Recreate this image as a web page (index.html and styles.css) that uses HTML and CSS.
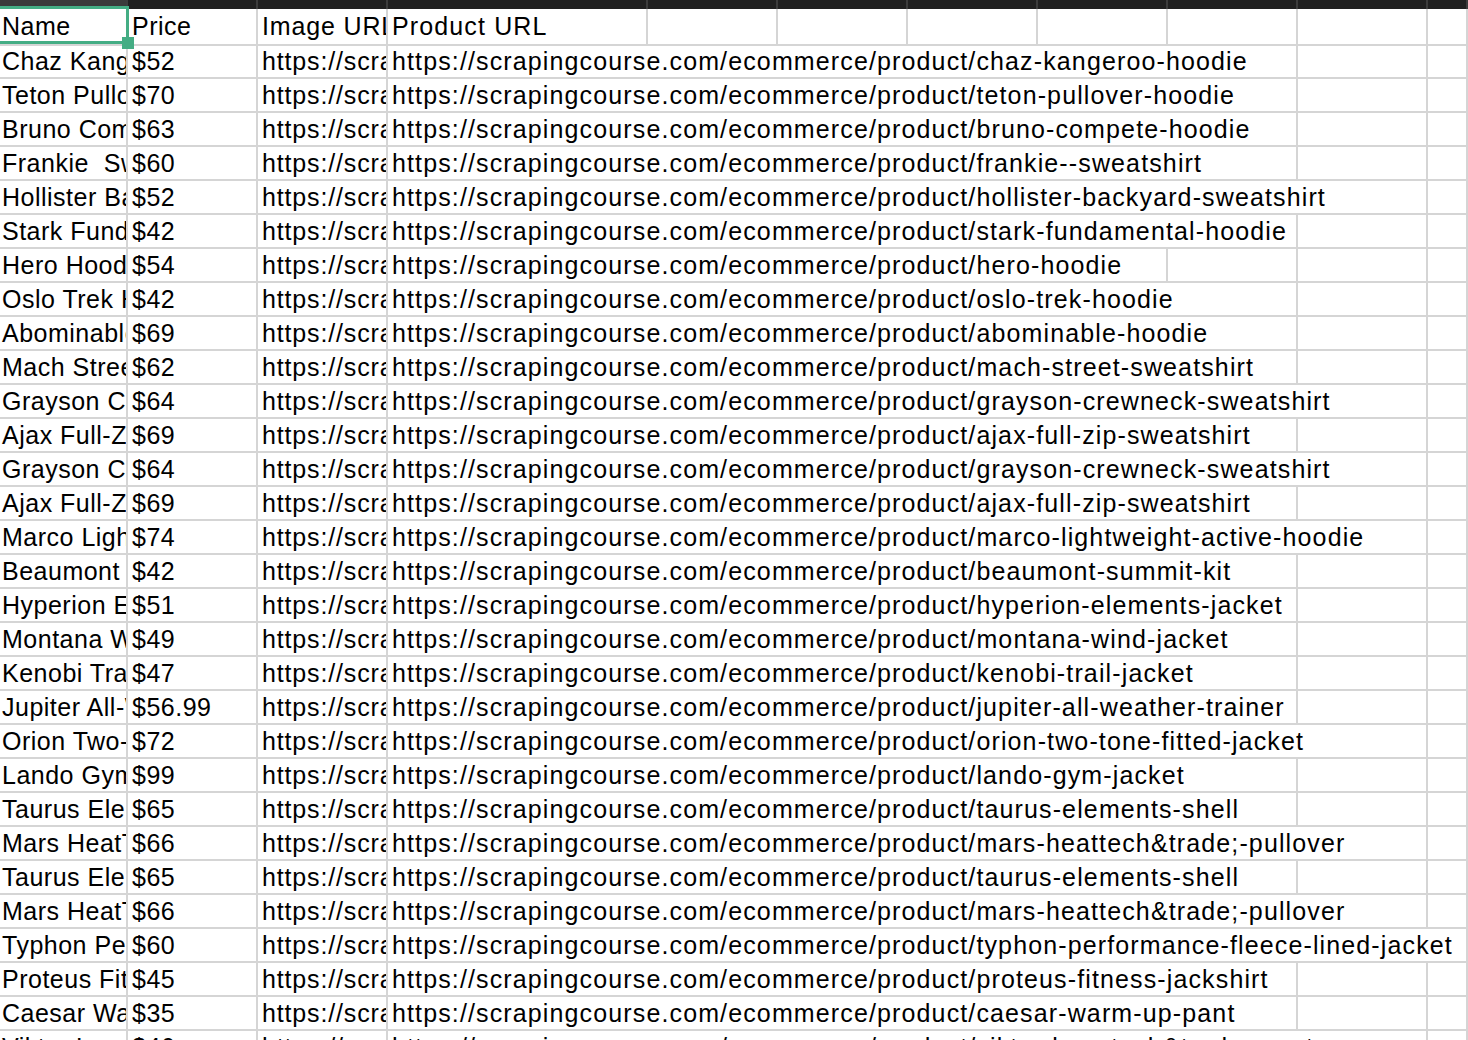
FILE: index.html
```html
<!DOCTYPE html>
<html>
<head>
<meta charset="utf-8">
<link rel="stylesheet" href="styles.css">
</head>
<body>
<div class="sheet">
  <div class="colbar">
    <div class="ch sel"></div><div class="ch"></div><div class="ch"></div><div class="ch"></div><div class="ch"></div><div class="ch"></div><div class="ch"></div><div class="ch"></div><div class="ch"></div><div class="ch"></div><div class="ch"></div>
  </div>
  <div class="row head">
    <div class="c a active">Name<span class="selbox"></span><span class="handle"></span></div><div class="c">Price</div><div class="c i">Image URL</div><div class="c d">Product URL</div><div class="c"></div><div class="c"></div><div class="c"></div><div class="c"></div><div class="c"></div><div class="c"></div><div class="c"></div>
  </div>
  <div class="row"><div class="c a">Chaz Kangeroo Hoodie</div><div class="c">$52</div><div class="c i">https://scrapingcourse.com/ecommerce/wp-content/uploads/2024/03/mh01-gray_main.jpg</div><div class="c u s6">https://scrapingcourse.com/ecommerce/product/chaz-kangeroo-hoodie</div><div class="c"></div><div class="c"></div></div>
  <div class="row"><div class="c a">Teton Pullover Hoodie</div><div class="c">$70</div><div class="c i">https://scrapingcourse.com/ecommerce/wp-content/uploads/2024/03/mh02-black_main.jpg</div><div class="c u s6">https://scrapingcourse.com/ecommerce/product/teton-pullover-hoodie</div><div class="c"></div><div class="c"></div></div>
  <div class="row"><div class="c a">Bruno Compete Hoodie</div><div class="c">$63</div><div class="c i">https://scrapingcourse.com/ecommerce/wp-content/uploads/2024/03/mh03-black_main.jpg</div><div class="c u s6">https://scrapingcourse.com/ecommerce/product/bruno-compete-hoodie</div><div class="c"></div><div class="c"></div></div>
  <div class="row"><div class="c a">Frankie&nbsp; Sweatshirt</div><div class="c">$60</div><div class="c i">https://scrapingcourse.com/ecommerce/wp-content/uploads/2024/03/mh04-green_main.jpg</div><div class="c u s6">https://scrapingcourse.com/ecommerce/product/frankie--sweatshirt</div><div class="c"></div><div class="c"></div></div>
  <div class="row"><div class="c a">Hollister Backyard Sweatshirt</div><div class="c">$52</div><div class="c i">https://scrapingcourse.com/ecommerce/wp-content/uploads/2024/03/mh05-white_main.jpg</div><div class="c u s7">https://scrapingcourse.com/ecommerce/product/hollister-backyard-sweatshirt</div><div class="c"></div></div>
  <div class="row"><div class="c a">Stark Fundamental Hoodie</div><div class="c">$42</div><div class="c i">https://scrapingcourse.com/ecommerce/wp-content/uploads/2024/03/mh06-blue_main.jpg</div><div class="c u s6">https://scrapingcourse.com/ecommerce/product/stark-fundamental-hoodie</div><div class="c"></div><div class="c"></div></div>
  <div class="row"><div class="c a">Hero Hoodie</div><div class="c">$54</div><div class="c i">https://scrapingcourse.com/ecommerce/wp-content/uploads/2024/03/mh07-gray_main.jpg</div><div class="c u s5">https://scrapingcourse.com/ecommerce/product/hero-hoodie</div><div class="c"></div><div class="c"></div><div class="c"></div></div>
  <div class="row"><div class="c a">Oslo Trek Hoodie</div><div class="c">$42</div><div class="c i">https://scrapingcourse.com/ecommerce/wp-content/uploads/2024/03/mh08-brown_main.jpg</div><div class="c u s6">https://scrapingcourse.com/ecommerce/product/oslo-trek-hoodie</div><div class="c"></div><div class="c"></div></div>
  <div class="row"><div class="c a">Abominable Hoodie</div><div class="c">$69</div><div class="c i">https://scrapingcourse.com/ecommerce/wp-content/uploads/2024/03/mh09-blue_main.jpg</div><div class="c u s6">https://scrapingcourse.com/ecommerce/product/abominable-hoodie</div><div class="c"></div><div class="c"></div></div>
  <div class="row"><div class="c a">Mach Street Sweatshirt</div><div class="c">$62</div><div class="c i">https://scrapingcourse.com/ecommerce/wp-content/uploads/2024/03/mh10-blue_main.jpg</div><div class="c u s6">https://scrapingcourse.com/ecommerce/product/mach-street-sweatshirt</div><div class="c"></div><div class="c"></div></div>
  <div class="row"><div class="c a">Grayson Crewneck Sweatshirt</div><div class="c">$64</div><div class="c i">https://scrapingcourse.com/ecommerce/wp-content/uploads/2024/03/mh11-orange_main.jpg</div><div class="c u s7">https://scrapingcourse.com/ecommerce/product/grayson-crewneck-sweatshirt</div><div class="c"></div></div>
  <div class="row"><div class="c a">Ajax Full-Zip Sweatshirt</div><div class="c">$69</div><div class="c i">https://scrapingcourse.com/ecommerce/wp-content/uploads/2024/03/mh12-green_main.jpg</div><div class="c u s6">https://scrapingcourse.com/ecommerce/product/ajax-full-zip-sweatshirt</div><div class="c"></div><div class="c"></div></div>
  <div class="row"><div class="c a">Grayson Crewneck Sweatshirt</div><div class="c">$64</div><div class="c i">https://scrapingcourse.com/ecommerce/wp-content/uploads/2024/03/mh11-orange_main.jpg</div><div class="c u s7">https://scrapingcourse.com/ecommerce/product/grayson-crewneck-sweatshirt</div><div class="c"></div></div>
  <div class="row"><div class="c a">Ajax Full-Zip Sweatshirt</div><div class="c">$69</div><div class="c i">https://scrapingcourse.com/ecommerce/wp-content/uploads/2024/03/mh12-green_main.jpg</div><div class="c u s6">https://scrapingcourse.com/ecommerce/product/ajax-full-zip-sweatshirt</div><div class="c"></div><div class="c"></div></div>
  <div class="row"><div class="c a">Marco Lightweight Active Hoodie</div><div class="c">$74</div><div class="c i">https://scrapingcourse.com/ecommerce/wp-content/uploads/2024/03/mh13-lavender_main.jpg</div><div class="c u s7">https://scrapingcourse.com/ecommerce/product/marco-lightweight-active-hoodie</div><div class="c"></div></div>
  <div class="row"><div class="c a">Beaumont Summit Kit</div><div class="c">$42</div><div class="c i">https://scrapingcourse.com/ecommerce/wp-content/uploads/2024/03/mj01-orange_main.jpg</div><div class="c u s6">https://scrapingcourse.com/ecommerce/product/beaumont-summit-kit</div><div class="c"></div><div class="c"></div></div>
  <div class="row"><div class="c a">Hyperion Elements Jacket</div><div class="c">$51</div><div class="c i">https://scrapingcourse.com/ecommerce/wp-content/uploads/2024/03/mj02-red_main.jpg</div><div class="c u s6">https://scrapingcourse.com/ecommerce/product/hyperion-elements-jacket</div><div class="c"></div><div class="c"></div></div>
  <div class="row"><div class="c a">Montana Wind Jacket</div><div class="c">$49</div><div class="c i">https://scrapingcourse.com/ecommerce/wp-content/uploads/2024/03/mj03-black_main.jpg</div><div class="c u s6">https://scrapingcourse.com/ecommerce/product/montana-wind-jacket</div><div class="c"></div><div class="c"></div></div>
  <div class="row"><div class="c a">Kenobi Trail Jacket</div><div class="c">$47</div><div class="c i">https://scrapingcourse.com/ecommerce/wp-content/uploads/2024/03/mj04-black_main.jpg</div><div class="c u s6">https://scrapingcourse.com/ecommerce/product/kenobi-trail-jacket</div><div class="c"></div><div class="c"></div></div>
  <div class="row"><div class="c a">Jupiter All-Weather Trainer</div><div class="c">$56.99</div><div class="c i">https://scrapingcourse.com/ecommerce/wp-content/uploads/2024/03/mj06-blue_main.jpg</div><div class="c u s6">https://scrapingcourse.com/ecommerce/product/jupiter-all-weather-trainer</div><div class="c"></div><div class="c"></div></div>
  <div class="row"><div class="c a">Orion Two-Tone Fitted Jacket</div><div class="c">$72</div><div class="c i">https://scrapingcourse.com/ecommerce/wp-content/uploads/2024/03/mj07-red_main.jpg</div><div class="c u s7">https://scrapingcourse.com/ecommerce/product/orion-two-tone-fitted-jacket</div><div class="c"></div></div>
  <div class="row"><div class="c a">Lando Gym Jacket</div><div class="c">$99</div><div class="c i">https://scrapingcourse.com/ecommerce/wp-content/uploads/2024/03/mj08-gray_main.jpg</div><div class="c u s6">https://scrapingcourse.com/ecommerce/product/lando-gym-jacket</div><div class="c"></div><div class="c"></div></div>
  <div class="row"><div class="c a">Taurus Elements Shell</div><div class="c">$65</div><div class="c i">https://scrapingcourse.com/ecommerce/wp-content/uploads/2024/03/mj09-yellow_main.jpg</div><div class="c u s6">https://scrapingcourse.com/ecommerce/product/taurus-elements-shell</div><div class="c"></div><div class="c"></div></div>
  <div class="row"><div class="c a">Mars HeatTech™ Pullover</div><div class="c">$66</div><div class="c i">https://scrapingcourse.com/ecommerce/wp-content/uploads/2024/03/mj10-red_main.jpg</div><div class="c u s7">https://scrapingcourse.com/ecommerce/product/mars-heattech&amp;trade;-pullover</div><div class="c"></div></div>
  <div class="row"><div class="c a">Taurus Elements Shell</div><div class="c">$65</div><div class="c i">https://scrapingcourse.com/ecommerce/wp-content/uploads/2024/03/mj09-yellow_main.jpg</div><div class="c u s6">https://scrapingcourse.com/ecommerce/product/taurus-elements-shell</div><div class="c"></div><div class="c"></div></div>
  <div class="row"><div class="c a">Mars HeatTech™ Pullover</div><div class="c">$66</div><div class="c i">https://scrapingcourse.com/ecommerce/wp-content/uploads/2024/03/mj10-red_main.jpg</div><div class="c u s7">https://scrapingcourse.com/ecommerce/product/mars-heattech&amp;trade;-pullover</div><div class="c"></div></div>
  <div class="row"><div class="c a">Typhon Performance Fleece-lined Jacket</div><div class="c">$60</div><div class="c i">https://scrapingcourse.com/ecommerce/wp-content/uploads/2024/03/mj11-green_main.jpg</div><div class="c u s8">https://scrapingcourse.com/ecommerce/product/typhon-performance-fleece-lined-jacket</div></div>
  <div class="row"><div class="c a">Proteus Fitness Jackshirt</div><div class="c">$45</div><div class="c i">https://scrapingcourse.com/ecommerce/wp-content/uploads/2024/03/mj12-orange_main.jpg</div><div class="c u s6">https://scrapingcourse.com/ecommerce/product/proteus-fitness-jackshirt</div><div class="c"></div><div class="c"></div></div>
  <div class="row"><div class="c a">Caesar Warm-Up Pant</div><div class="c">$35</div><div class="c i">https://scrapingcourse.com/ecommerce/wp-content/uploads/2024/03/mp01-gray_main.jpg</div><div class="c u s6">https://scrapingcourse.com/ecommerce/product/caesar-warm-up-pant</div><div class="c"></div><div class="c"></div></div>
  <div class="row"><div class="c a">Viktor LumaTech™ Pant</div><div class="c">$46</div><div class="c i">https://scrapingcourse.com/ecommerce/wp-content/uploads/2024/03/mp02-blue_main.jpg</div><div class="c u s7">https://scrapingcourse.com/ecommerce/product/viktor-lumatech&amp;trade;-pant</div><div class="c"></div></div>
</div>
</body>
</html>
```

FILE: styles.css
```css
html, body {
  margin: 0;
  padding: 0;
  background: #ffffff;
  overflow: hidden;
}

.sheet {
  width: 1468px;
  font-family: "Liberation Sans", Arial, Helvetica, sans-serif;
  font-size: 25px;
  letter-spacing: 0.5px;
  color: #000;
}

.colbar,
.row {
  display: grid;
  grid-template-columns: 128px 130px 130px 260px repeat(6, 130px) 1fr;
}

.colbar {
  height: 9px;
  background: #202020;
}

.ch {
  border-right: 2px solid #3c3c3c;
  box-sizing: border-box;
}

.ch.sel {
  background: #3a3a3a;
}

.row {
  height: 34px;
}

.row.head {
  height: 36px;
}

.c {
  box-sizing: border-box;
  border-right: 2px solid #d5d5d5;
  border-bottom: 2px solid #d5d5d5;
  padding-left: 4px;
  line-height: 32px;
  white-space: nowrap;
  overflow: hidden;
  min-width: 0;
}

.head .c {
  line-height: 35px;
}

.c.a {
  padding-left: 2px;
}

.c.i {
  letter-spacing: 0.85px;
}

.c.active {
  position: relative;
  overflow: visible;
}

.selbox {
  position: absolute;
  left: -3px;
  top: -3px;
  width: 132px;
  height: 38px;
  box-sizing: border-box;
  border: 3px solid #44ad84;
  pointer-events: none;
}

.handle {
  position: absolute;
  left: 122px;
  top: 28px;
  width: 12px;
  height: 12px;
  background: #44ad84;
}

.u,
.d {
  letter-spacing: 1.13px;
}

.u { overflow: visible; }
.s5 { grid-column: span 5; }
.s6 { grid-column: span 6; }
.s7 { grid-column: span 7; }
.s8 { grid-column: span 8; }
```
